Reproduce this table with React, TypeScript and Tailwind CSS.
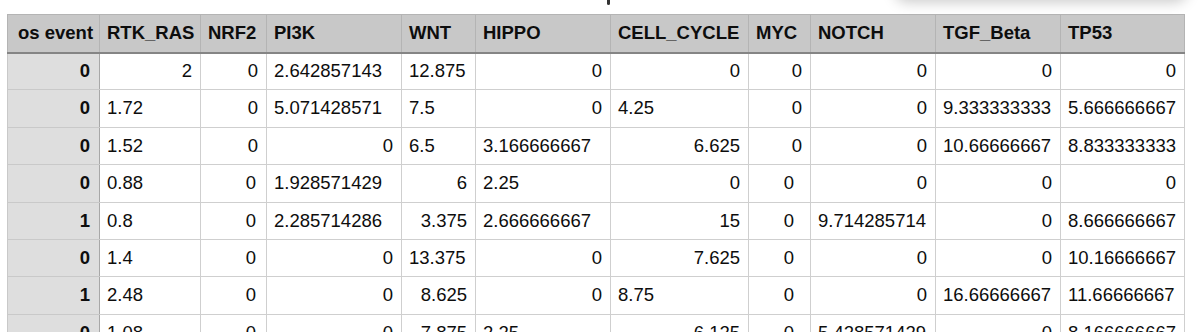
import React from "react";

type Cell = { v: string; a?: "l" | "r"; pr?: string };

const headers = ["os event", "RTK_RAS", "NRF2", "PI3K", "WNT", "HIPPO", "CELL_CYCLE", "MYC", "NOTCH", "TGF_Beta", "TP53"];
const widths = ["w-[92px]", "w-[101px]", "w-[66px]", "w-[135px]", "w-[74px]", "w-[135px]", "w-[138px]", "w-[62px]", "w-[125px]", "w-[125px]", "w-[124px]"];

const L = (v: string): Cell => ({ v, a: "l" });
const R = (v: string): Cell => ({ v, a: "r" });
const N2: Cell = { v: "0", a: "r", pr: "pr-[10px]" };
const M2: Cell = { v: "0", a: "r", pr: "pr-[16px]" };

const rows: { ev: string; cells: Cell[] }[] = [
  { ev: "0", cells: [R("2"), R("0"), L("2.642857143"), L("12.875"), R("0"), R("0"), R("0"), R("0"), R("0"), R("0")] },
  { ev: "0", cells: [L("1.72"), R("0"), L("5.071428571"), L("7.5"), R("0"), L("4.25"), R("0"), R("0"), L("9.333333333"), L("5.666666667")] },
  { ev: "0", cells: [L("1.52"), R("0"), R("0"), L("6.5"), L("3.166666667"), R("6.625"), R("0"), R("0"), L("10.66666667"), L("8.833333333")] },
  { ev: "0", cells: [L("0.88"), N2, L("1.928571429"), R("6"), L("2.25"), R("0"), M2, R("0"), R("0"), R("0")] },
  { ev: "1", cells: [L("0.8"), N2, L("2.285714286"), R("3.375"), L("2.666666667"), R("15"), M2, L("9.714285714"), R("0"), L("8.666666667")] },
  { ev: "0", cells: [L("1.4"), N2, R("0"), L("13.375"), R("0"), R("7.625"), M2, R("0"), R("0"), L("10.16666667")] },
  { ev: "1", cells: [L("2.48"), N2, R("0"), R("8.625"), R("0"), L("8.75"), M2, R("0"), L("16.66666667"), L("11.66666667")] },
  { ev: "0", cells: [L("1.08"), N2, R("0"), R("7.875"), L("2.25"), R("6.125"), M2, L("5.428571429"), R("0"), L("8.166666667")] },
];

export default function App() {
  return (
    <div className="relative w-[1200px] h-[332px] overflow-hidden bg-white" style={{ fontFamily: '"Liberation Sans", Arial, sans-serif' }}>
      {/* shadow of an overlapping panel above the view */}
      <div className="absolute left-[895px] top-[-80px] w-[292px] h-[80px] bg-white rounded-b-[12px] shadow-[0_2px_14px_rgba(0,0,0,0.22)]" />
      <div className="absolute left-[607px] top-0 w-[3px] h-[5px] bg-[#333] rounded-b-[2px]" />
      <div className="pt-[14px] pl-[7px]">
        <table className="table-fixed border-collapse text-[18.5px] leading-none text-[#0d0d0d]">
          <colgroup>
            {widths.map((w, i) => (
              <col key={i} className={w} />
            ))}
          </colgroup>
          <thead>
            <tr className="h-[38px] bg-[#c8c8c8]">
              {headers.map((h, i) => (
                <th
                  key={i}
                  className={`font-bold text-left pl-[7px] border border-[#b4b4b4] border-b-2 border-b-[#858585] whitespace-nowrap ${i === 0 ? "pl-[10px]" : ""}`}
                >
                  {h}
                </th>
              ))}
            </tr>
          </thead>
          <tbody>
            {rows.map((r, ri) => (
              <tr key={ri} className="h-[37.4px]">
                <td className="bg-[#dedede] font-bold text-right pr-[9px] border border-[#c9c9c9] border-r-[#a8a8a8]">{r.ev}</td>
                {r.cells.map((c, ci) => (
                  <td
                    key={ci}
                    className={`border border-[#cfcfcf] whitespace-nowrap ${c.a === "l" ? "text-left pl-[7px]" : `text-right ${c.pr ?? "pr-[8px]"}`}`}
                  >
                    {c.v}
                  </td>
                ))}
              </tr>
            ))}
          </tbody>
        </table>
      </div>
    </div>
  );
}
